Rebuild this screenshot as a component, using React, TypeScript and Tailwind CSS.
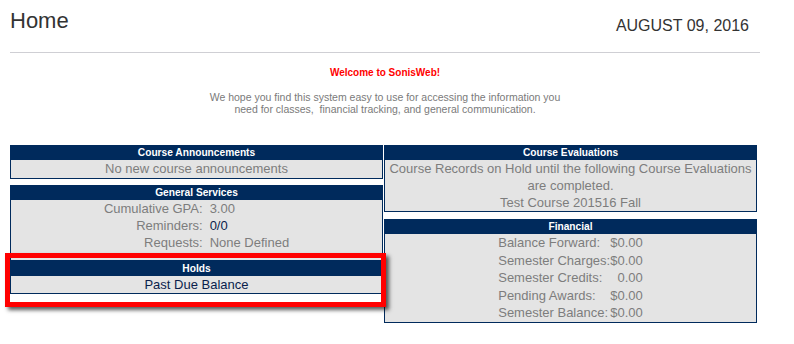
import React from "react";

const navy = "bg-[#002a5c]";

function Panel({ title, children }: { title: string; children: React.ReactNode }) {
  return (
    <div className="border border-[#002a5c]">
      <div className={`${navy} h-[14px] text-center text-[10.2px] font-bold leading-[14px] text-white`}>
        {title}
      </div>
      <div className="bg-[#e4e4e4] text-center text-[13px] text-[#7d7d7d]">{children}</div>
    </div>
  );
}

const financial = [
  ["Balance Forward:", "$0.00"],
  ["Semester Charges:", "$0.00"],
  ["Semester Credits:", "0.00"],
  ["Pending Awards:", "$0.00"],
  ["Semester Balance:", "$0.00"],
];

export default function App() {
  return (
    <div className="relative h-[344px] w-[794px] overflow-hidden bg-white font-['Liberation_Sans',Arial,sans-serif]">
      <div className="ml-[10px] w-[750px]">
        {/* Title bar */}
        <div className="flex h-[53px] items-start justify-between border-b border-[#cfcfd4] pt-[7px]">
          <h1 className="text-[22px] leading-[28px] text-[#333333]">Home</h1>
          <div className="mr-[11px] mt-[9px] text-[16px] leading-[20px] text-[#333333]">AUGUST 09, 2016</div>
        </div>

        {/* Welcome */}
        <p className="mt-[14px] text-center text-[10px] font-bold leading-[12px] text-[#ff0000]">
          Welcome to SonisWeb!
        </p>
        <p className="mt-[12px] text-center text-[10.5px] leading-[12px] text-[#7a7a7a]">
          We hope you find this system easy to use for accessing the information you
          <br />
          need for classes,&nbsp; financial tracking, and general communication.
        </p>
      </div>

      {/* Panels */}
      <div className="ml-[10px] mt-[30px] grid w-[747px] grid-cols-2 items-start gap-[1px]">
        <div className="flex flex-col">
          <Panel title="Course Announcements">
            <div className="leading-[18px]">No new course announcements</div>
          </Panel>

          <div className="mt-[6px]">
            <Panel title="General Services">
              <div className="grid grid-cols-[auto_auto] justify-center gap-x-[7px] pb-[9px] leading-[17px]">
                <div className="text-right">Cumulative GPA:</div>
                <div className="text-left">3.00</div>
                <div className="text-right">Reminders:</div>
                <div className="text-left text-[#0a1e4c]">0/0</div>
                <div className="text-right">Requests:</div>
                <div className="text-left">None Defined</div>
              </div>
            </Panel>
          </div>

          <div className="relative">
            <Panel title="Holds">
              <div className="leading-[17px] text-[#0a1e4c]">Past Due Balance</div>
            </Panel>
            {/* Highlight annotation */}
            <div className="absolute -bottom-[13px] -left-[5px] -right-[3px] -top-[8px] border-[5px] border-[#ff0000] shadow-[3px_3px_4px_rgba(0,0,0,0.65)]" />
          </div>
        </div>

        <div className="flex flex-col">
          <Panel title="Course Evaluations">
            <div className="leading-[17px]">
              Course Records on Hold until the following Course Evaluations
              <br />
              are completed.
              <br />
              Test Course 201516 Fall
            </div>
          </Panel>

          <div className="mt-[7px]">
            <Panel title="Financial">
              <div className="grid grid-cols-[auto_auto] justify-center leading-[17.5px]">
                {financial.map(([label, value]) => (
                  <React.Fragment key={label}>
                    <div className="text-left">{label}</div>
                    <div className="text-right">{value}</div>
                  </React.Fragment>
                ))}
              </div>
            </Panel>
          </div>
        </div>
      </div>
    </div>
  );
}
